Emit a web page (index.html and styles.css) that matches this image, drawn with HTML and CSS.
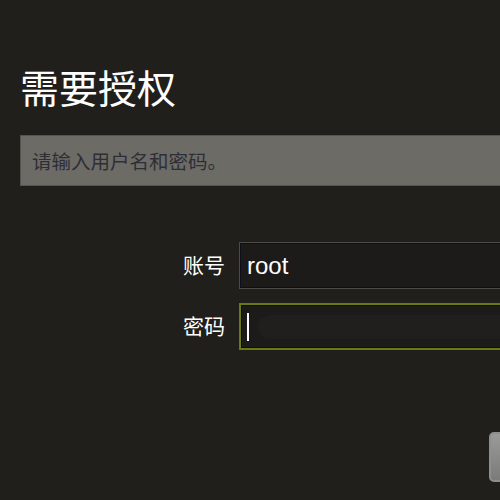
FILE: index.html
```html
<!DOCTYPE html>
<html lang="zh">
<head>
<meta charset="utf-8">
<title>需要授权</title>
<link rel="stylesheet" href="styles.css">
</head>
<body>
<div class="page">
  <h1 class="title">需要授权</h1>
  <div class="notice">请输入用户名和密码。</div>
  <div class="form">
    <div class="row">
      <label class="label">账号</label>
      <div class="field"><span class="value">root</span></div>
    </div>
    <div class="row">
      <label class="label">密码</label>
      <div class="field focused"><span class="caret"></span><span class="ghost"></span></div>
    </div>
  </div>
  <div class="actions"><div class="button"></div></div>
</div>
</body>
</html>
```
FILE: styles.css
```css
html, body {
  margin: 0;
  padding: 0;
  overflow: hidden;
  background: #201f1b;
  height: 100%;
}
.page {
  padding: 62px 0 0 20px;
  font-family: "Noto Sans CJK SC", "Liberation Sans", sans-serif;
  color: #ffffff;
  overflow: hidden;
}
.title {
  margin: 0;
  font-size: 39px;
  font-weight: normal;
  line-height: 48px;
  height: 48px;
}
.notice {
  margin-top: 25px;
  width: 520px;
  height: 49px;
  border: 1px solid #55544f;
  background: #6c6b66;
  color: #2f2e36;
  font-size: 19.5px;
  line-height: 49px;
  padding-left: 11px;
}
.form {
  margin-top: 56px;
  display: flex;
  flex-direction: column;
  gap: 14px;
}
.row {
  display: flex;
  align-items: center;
}
.label {
  flex: 0 0 auto;
  width: 205px;
  text-align: right;
  font-size: 21px;
  padding-right: 14px;
  padding-bottom: 4px;
}
.field {
  flex: 0 0 auto;
  width: 300px;
  height: 45px;
  border: 1px solid #4c4b48;
  background: #1c1b19;
  box-shadow: inset 0 0 0 1px #0d0e1c;
  display: flex;
  align-items: center;
  padding-left: 7px;
}
.value {
  font-family: "Liberation Sans", sans-serif;
  font-size: 24px;
  line-height: 28px;
  color: #ffffff;
}
.focused {
  border: 2px solid #6a7815;
  height: 43px;
  padding-left: 6px;
}
.caret {
  width: 2px;
  height: 28px;
  background: #ffffff;
}
.ghost {
  margin-left: 9px;
  width: 260px;
  height: 24px;
  border-radius: 12px;
  background: #201f1d;
}
.actions {
  margin-top: 82px;
  display: flex;
  padding-left: 469px;
}
.button {
  flex: 0 0 auto;
  width: 80px;
  height: 50px;
  border-radius: 5px;
  border: 2px solid #8e8e8c;
  background: linear-gradient(#9a9a98, #7b7b79);
  box-sizing: border-box;
}
```
